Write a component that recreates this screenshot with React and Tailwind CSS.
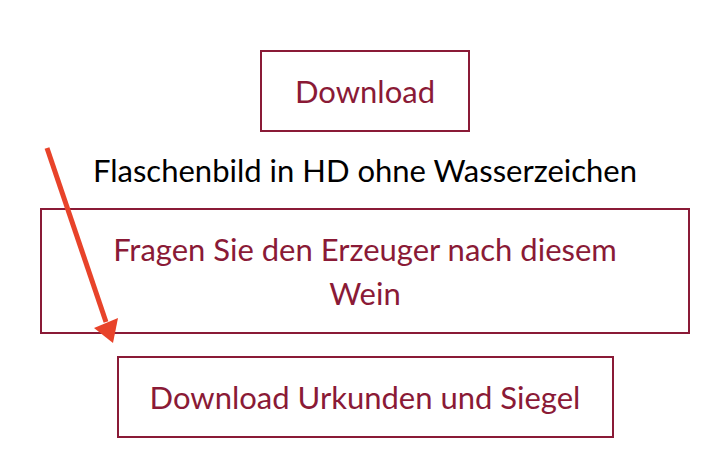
export default function App() {
  return (
    <div className="relative w-[724px] h-[464px] bg-white overflow-hidden font-['Lato',sans-serif]">
      <div className="flex flex-col items-center pt-[50px] pl-[6px]">
        <button className="w-[210px] h-[82px] border-2 border-[#8a1a36] text-[#8a1a36] text-[31px] leading-none">
          Download
        </button>
        <p className="mt-[23px] text-[31px] leading-none text-black">
          Flaschenbild in HD ohne Wasserzeichen
        </p>
        <button className="mt-[22px] w-[650px] h-[126px] border-2 border-[#8a1a36] text-[#8a1a36] text-[31px] leading-[44px] px-[64px]">
          Fragen Sie den Erzeuger nach diesem Wein
        </button>
        <button className="mt-[22px] w-[497px] h-[82px] border-2 border-[#8a1a36] text-[#8a1a36] text-[31px] leading-none">
          Download Urkunden und Siegel
        </button>
      </div>

      {/* red pointer arrow */}
      <svg className="absolute left-0 top-0 pointer-events-none" width="724" height="464">
        <line x1="47" y1="148" x2="106" y2="322" stroke="#e8432a" strokeWidth="5" />
        <polygon points="94,328 118,318 113,343" fill="#e8432a" />
      </svg>
    </div>
  );
}
